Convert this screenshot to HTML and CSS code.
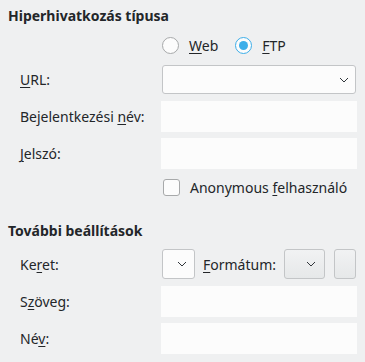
FILE: index.html
```html
<!DOCTYPE html>
<html lang="hu">
<head>
    <meta charset="UTF-8">
    <title>Hiperhivatkozás</title>
    <link rel="stylesheet" href="styles.css">
</head>
<body>
    <h2 class="title first">Hiperhivatkozás típusa</h2>

    <div class="row radios">
        <span class="label"></span>
        <label class="choice"><span class="radio"></span><span><u>W</u>eb</span></label>
        <label class="choice"><span class="radio checked"></span><span><u>F</u>TP</span></label>
    </div>

    <div class="row url-row">
        <span class="label"><u>U</u>RL:</span>
        <div class="combo wide">
            <svg class="chev" width="10" height="6" viewBox="0 0 10 6"><path d="M1 1 L5 5 L9 1" fill="none" stroke="#31363b" stroke-width="1"/></svg>
        </div>
    </div>

    <div class="row field-row login">
        <span class="label">Bejelentkezési <u>n</u>év:</span>
        <div class="field"></div>
    </div>

    <div class="row field-row pass">
        <span class="label"><u>J</u>elszó:</span>
        <div class="field"></div>
    </div>

    <div class="row check-row">
        <span class="label"></span>
        <label class="choice"><span class="checkbox"></span><span>Anonymous <u>f</u>elhasználó</span></label>
    </div>

    <h2 class="title second">További beállítások</h2>

    <div class="row frame-row">
        <span class="label">Ke<u>r</u>et:</span>
        <div class="combo small">
            <svg class="chev" width="10" height="6" viewBox="0 0 10 6"><path d="M1 1 L5 5 L9 1" fill="none" stroke="#31363b" stroke-width="1"/></svg>
        </div>
        <span class="inline-label"><u>F</u>ormátum:</span>
        <div class="combo button-combo">
            <svg class="chev" width="10" height="6" viewBox="0 0 10 6"><path d="M1 1 L5 5 L9 1" fill="none" stroke="#31363b" stroke-width="1"/></svg>
        </div>
        <div class="tool-button"></div>
    </div>

    <div class="row field-row text-row">
        <span class="label">S<u>z</u>öveg:</span>
        <div class="field"></div>
    </div>

    <div class="row field-row name-row">
        <span class="label">Né<u>v</u>:</span>
        <div class="field"></div>
    </div>
</body>
</html>
```

FILE: styles.css
```css
body {
    margin: 0;
    background: #eff0f1;
    color: #232629;
    font-family: "Noto Sans", "Open Sans", sans-serif;
    font-size: 14px;
    width: 365px;
    height: 362px;
    overflow: hidden;
}
u {
    text-decoration-thickness: 1px;
    text-underline-offset: 2px;
}
.title {
    margin: 0 8px;
    height: 20px;
    line-height: 20px;
    font-size: 14px;
    font-weight: bold;
}
.title.first {
    margin-top: 6px;
}
.title.second {
    margin-top: 25px;
}
.row {
    display: flex;
    align-items: center;
}
.label {
    width: 141px;
    padding-left: 20px;
    flex-shrink: 0;
}
.radios {
    height: 18px;
    margin-top: 10px;
}
.choice {
    display: flex;
    align-items: center;
    margin-left: 1px;
}
.radios .choice + .choice {
    margin-left: 17px;
}
.radio {
    width: 15px;
    height: 15px;
    border: 1px solid #a7a9aa;
    border-radius: 50%;
    background: #fcfcfc;
    margin-right: 10px;
    position: relative;
}
.radio.checked {
    border-color: #3daee9;
}
.radio.checked::after {
    content: "";
    position: absolute;
    left: 3px;
    top: 3px;
    width: 9px;
    height: 9px;
    border-radius: 50%;
    background: #3daee9;
}
.checkbox {
    width: 15px;
    height: 15px;
    border: 1px solid #a7a9aa;
    border-radius: 3px;
    background: #fcfcfc;
    margin-right: 10px;
}
.url-row {
    height: 29px;
    margin-top: 11px;
}
.combo {
    box-sizing: border-box;
    height: 100%;
    border: 1px solid #c3c5c7;
    border-radius: 3px;
    background: #fcfcfc;
    display: flex;
    align-items: center;
    justify-content: flex-end;
}
.combo.wide {
    width: 194px;
    margin-left: 1px;
}
.chev {
    margin-right: 6px;
}
.field-row {
    height: 31px;
}
.field {
    width: 196px;
    height: 100%;
    background: #fcfcfc;
}
.login {
    margin-top: 7px;
}
.pass {
    margin-top: 6px;
}
.check-row {
    height: 17px;
    margin-top: 10px;
}
.check-row .choice {
    margin-left: 2px;
}
.frame-row {
    height: 30px;
    margin-top: 8px;
}
.combo.small {
    width: 33px;
    margin-left: 1px;
    justify-content: center;
}
.combo.small .chev {
    margin: 0 0 0 6px;
}
.inline-label {
    margin-left: 8px;
    width: 81px;
}
.combo.button-combo {
    width: 41px;
    background: linear-gradient(#f1f2f3, #e6e8e9);
}
.combo.button-combo .chev {
    margin-right: 8px;
}
.tool-button {
    box-sizing: border-box;
    width: 22px;
    height: 100%;
    margin-left: 9px;
    border: 1px solid #c3c5c7;
    border-radius: 3px;
    background: linear-gradient(#f1f2f3, #e6e8e9);
}
.text-row {
    margin-top: 7px;
}
.name-row {
    margin-top: 6px;
}
```
